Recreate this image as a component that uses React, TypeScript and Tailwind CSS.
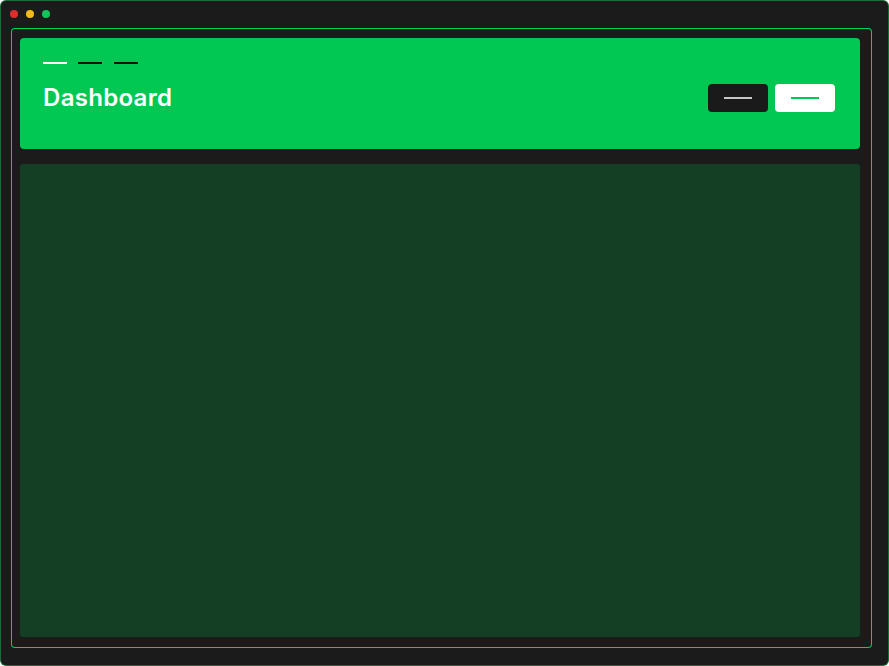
import React from 'react';

function Dash({ className }: { className: string }) {
    return <span className={`block h-[2px] w-[24px] ${className}`} />;
}

export default function App() {
    return (
        <div className="w-[889px] h-[666px] bg-[#1d6b38] p-[1px] rounded-[6px]" style={{ fontFamily: 'Inter, "Noto Sans", sans-serif' }}>
            <div className="w-full h-full bg-[#1b1b1c] rounded-[5px] flex flex-col overflow-hidden">
                {/* Title bar */}
                <div className="h-[27px] shrink-0 flex items-center gap-[8px] pl-[9px] pb-[1px]">
                    <span className="w-[8px] h-[8px] rounded-full bg-[#dc2f2f]" />
                    <span className="w-[8px] h-[8px] rounded-full bg-[#f5b919]" />
                    <span className="w-[8px] h-[8px] rounded-full bg-[#13c45a]" />
                </div>

                {/* Frame */}
                <div className="flex-1 ml-[10px] mr-[16px] mb-[17px] bg-[#00d45a] p-[1px] rounded-[4px] flex">
                    <div className="flex-1 bg-[#1b1b1c] rounded-[3px] pt-[9px] pl-[8px] pr-[11px] pb-[10px] flex flex-col gap-[15px]">
                        {/* Header */}
                        <div className="h-[111px] shrink-0 bg-[#00c853] rounded-[4px] pl-[23px] pr-[25px] pt-[24px]">
                            <div className="flex items-center gap-[11px]">
                                <Dash className="bg-white" />
                                <Dash className="bg-[#111111]" />
                                <Dash className="bg-[#111111] ml-[1px]" />
                            </div>
                            <div className="mt-[18px] flex items-center justify-between">
                                <h1 className="text-[24px] leading-[32px] font-semibold text-white tracking-[0.3px]">Dashboard</h1>
                                <div className="flex items-center gap-[7px]">
                                    <button className="w-[60px] h-[28px] rounded-[4px] bg-[#1a1a1a] flex items-center justify-center">
                                        <span className="block w-[28px] h-[2px] bg-[#c8c8c8]" />
                                    </button>
                                    <button className="w-[60px] h-[28px] rounded-[4px] bg-white flex items-center justify-center">
                                        <span className="block w-[28px] h-[2px] bg-[#00c853]" />
                                    </button>
                                </div>
                            </div>
                        </div>

                        {/* Main panel */}
                        <div className="flex-1 bg-[#153f24] rounded-[3px]" />
                    </div>
                </div>
            </div>
        </div>
    );
}
